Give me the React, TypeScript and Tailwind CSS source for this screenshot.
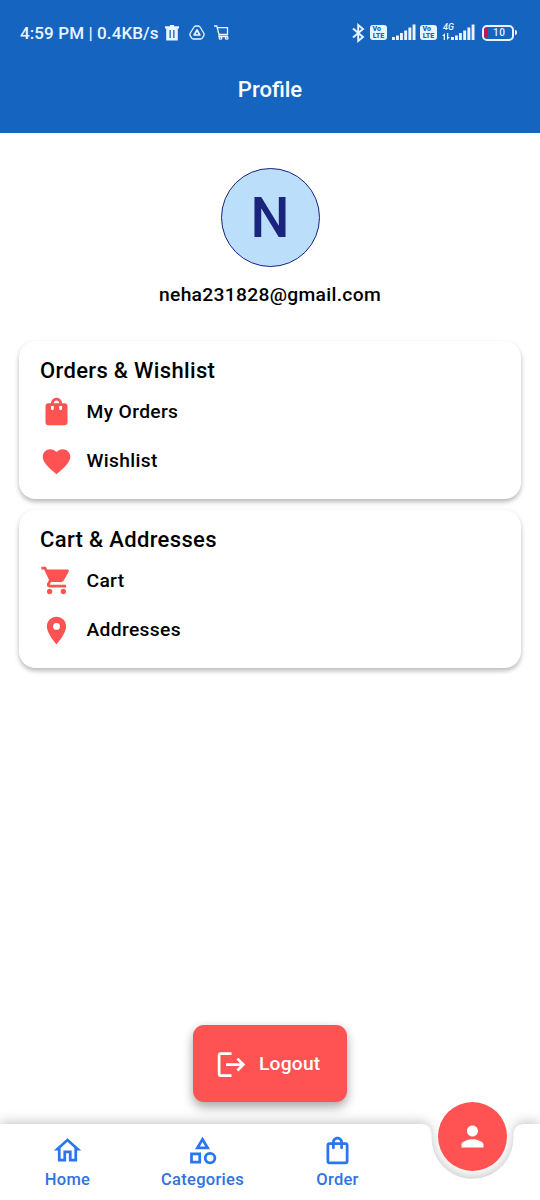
import { IconType } from "react-icons";
import {
  MdFavorite,
  MdLogout,
  MdOutlineCategory,
  MdOutlineHome,
  MdOutlineShoppingBag,
  MdPerson,
  MdPlace,
  MdShoppingBag,
  MdShoppingCart,
} from "react-icons/md";

interface MenuItem {
  label: string;
  icon: IconType;
}

interface MenuCardProps {
  title: string;
  items: MenuItem[];
}

const orderItems: MenuItem[] = [
  { label: "My Orders", icon: MdShoppingBag },
  { label: "Wishlist", icon: MdFavorite },
];

const cartItems: MenuItem[] = [
  { label: "Cart", icon: MdShoppingCart },
  { label: "Addresses", icon: MdPlace },
];

const navItems: MenuItem[] = [
  { label: "Home", icon: MdOutlineHome },
  { label: "Categories", icon: MdOutlineCategory },
  { label: "Order", icon: MdOutlineShoppingBag },
];

const SignalBars = () => (
  <svg width="24" height="17" viewBox="0 0 24 17" fill="currentColor">
    <rect x="0" y="13" width="2.9" height="3" />
    <rect x="4" y="11.5" width="2.9" height="4.5" />
    <rect x="8" y="9" width="2.9" height="7" />
    <rect x="12.2" y="6.5" width="2.9" height="9.5" />
    <rect x="16.4" y="3.5" width="2.9" height="12.5" />
    <rect x="20.6" y="0.5" width="2.9" height="15.5" />
  </svg>
);

const VolteBadge = () => (
  <div className="flex h-[15px] w-[17px] flex-col rounded-[3px] bg-[#eaf4ff] px-[1.5px] pt-[1px] text-[7px] leading-[6.5px] font-black text-[#1565c0]">
    <span className="pl-px">Vo</span>
    <span className="self-center">LTE</span>
  </div>
);

const StatusBar = () => (
  <div className="flex h-[65px] items-center text-[#eaf4ff]">
    <span className="ml-5 w-[140px] pt-[2px] text-[17px] font-medium tracking-[0.1px] whitespace-nowrap">
      4:59 PM | 0.4KB/s
    </span>
    <svg className="ml-[5px]" width="14" height="16" viewBox="0 0 14 16" fill="currentColor">
      <path fillRule="evenodd" d="M5 0h4v1.3h5v2.2h-1.2V15.5H1.2V3.5H0V1.3h5zM4.5 5v8h1.3V5zm3.7 0v8h1.3V5z" />
    </svg>
    <svg className="ml-[10px]" width="16" height="15" viewBox="0 0 16 15" fill="none" stroke="currentColor" strokeLinejoin="round">
      <path d="M6.3 1h3.4L11 2l4 6.5v1.8L13 13.5l-1 .5H4l-1-.5L1 10.3V8.5L5 2z" strokeWidth="1.3" />
      <path d="M8 5 10.8 10H5.2z" strokeWidth="1.7" />
    </svg>
    <svg className="ml-[9px]" width="16" height="15" viewBox="0 0 16 15" fill="none" stroke="currentColor" strokeWidth="1.3">
      <path d="M0 1h2.8l2.2 8.5h8.5V2.7H3.5M5 9.5v2h9" />
      <circle cx="6.5" cy="12.9" r="1.3" />
      <circle cx="12.7" cy="12.9" r="1.3" />
    </svg>

    <svg className="ml-[122px]" width="13" height="20" viewBox="0 0 13 20" fill="none" stroke="currentColor" strokeWidth="1.9">
      <path d="M1 5.5 11 14 6.2 18V2L11 6 1 14.5" />
    </svg>
    <div className="ml-[5px]">
      <VolteBadge />
    </div>
    <div className="ml-[5px]">
      <SignalBars />
    </div>
    <div className="ml-[4px]">
      <VolteBadge />
    </div>
    <div className="relative ml-[14px]">
      <SignalBars />
      <span className="absolute -top-[1px] -left-[8px] text-[9px] leading-[9px] font-medium italic">4G</span>
      <svg className="absolute top-[9px] -left-[9px]" width="8" height="7" viewBox="0 0 8 7" fill="currentColor">
        <path d="M3 0v7H1.7V3H0zM5 7V0h1.3v4H8z" />
      </svg>
    </div>
    <div className="ml-[7px] flex h-[16px] w-[32px] items-center rounded-[5px] border-[2px] border-current">
      <div className="h-[10px] w-[4px] rounded-l-[2px] bg-[#b3204d]" />
      <span className="ml-[5px] text-[10px] leading-none font-medium tracking-[0.5px]">10</span>
    </div>
    <div className="ml-[1px] h-[5px] w-[2px] rounded-r-sm bg-current" />
  </div>
);

const MenuCard = ({ title, items }: MenuCardProps) => (
  <section className="h-[158px] rounded-[16.5px] bg-white px-[21px] pt-[17px] shadow-[0_3px_4px_rgba(0,0,0,0.22),0_2px_7px_rgba(0,0,0,0.07)]">
    <h2 className="text-[22px] leading-[26px] font-medium tracking-[0.34px]">{title}</h2>
    <div className="mt-[11px] flex flex-col gap-[16.5px]">
      {items.map(({ label, icon: Icon }) => (
        <div key={label} className="flex h-[33px] items-center">
          <Icon className="-ml-[0.5px] size-[33px] shrink-0 text-[#ff5252]" />
          <span className="ml-[14px] text-[19.25px] leading-[22px] font-medium tracking-[0.34px]">{label}</span>
        </div>
      ))}
    </div>
  </section>
);

const BottomNav = () => (
  <nav className="relative grid h-[76px] grid-cols-4">
    {/* Bar surface with the notch cut out around the profile button */}
    <svg
      className="absolute inset-0 overflow-visible drop-shadow-[0_-2px_6px_rgba(0,0,0,0.22)]"
      width="540"
      height="76"
      viewBox="0 0 540 76"
      fill="#ffffff"
    >
      <path d="M0 0H421Q431 0 431.6 11A41 41 0 1 0 513.4 11Q514 0 524 0H540V76H0Z" />
    </svg>
    {navItems.map(({ label, icon: Icon }) => (
      <a key={label} className="relative flex flex-col items-center pt-[10px] text-[#2976f2]">
        <Icon className="size-[33px]" />
        <span className="mt-[3px] text-[16.5px] leading-[19px] font-medium tracking-[0.3px] text-[#2f73e0]">{label}</span>
      </a>
    ))}
    <div className="relative flex justify-center">
      <button className="-mt-[22px] flex size-[69px] items-center justify-center rounded-full bg-[#ff5252] text-white" aria-label="Profile">
        <MdPerson className="size-[33px]" />
      </button>
    </div>
  </nav>
);

const App = () => {
  return (
    <div className="flex h-[1200px] w-[540px] flex-col overflow-hidden bg-white font-['Roboto',sans-serif] text-black">
      <header className="h-[133px] bg-[#1565c0]">
        <StatusBar />
        <h1 className="mt-[12px] text-center text-[22px] leading-[26px] font-medium text-white">Profile</h1>
      </header>

      <main className="flex flex-1 flex-col px-[19px] pt-[35px]">
        <div className="flex size-[99px] items-center justify-center self-center rounded-full border-[1.4px] border-[#1a237e] bg-[#bbdefb] pt-[2px] text-[55px] leading-none font-medium text-[#1a237e]">
          N
        </div>
        <p className="mt-[17px] text-center text-[19.25px] leading-[22px] font-medium tracking-[0.3px]">
          neha231828@gmail.com
        </p>

        <div className="mt-[35px] flex flex-col gap-[11px]">
          <MenuCard title="Orders & Wishlist" items={orderItems} />
          <MenuCard title="Cart & Addresses" items={cartItems} />
        </div>

        <button className="mt-auto mb-[22px] flex h-[77px] w-[154px] items-center self-center rounded-[11px] bg-[#ff5252] pt-px pl-[22px] text-white shadow-[0_6px_11px_rgba(0,0,0,0.26),0_2px_8px_rgba(0,0,0,0.12)]">
          <MdLogout className="size-[33px]" />
          <span className="ml-[11px] text-[19.25px] font-medium tracking-[0.2px]">Logout</span>
        </button>
      </main>

      <BottomNav />
    </div>
  );
};

export default App;
